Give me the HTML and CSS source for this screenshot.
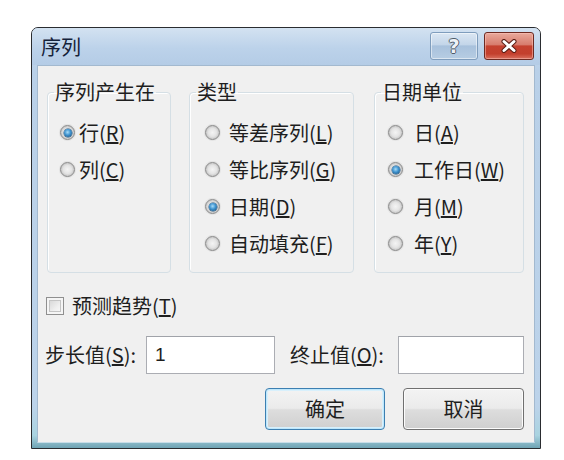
FILE: index.html
```html
<!DOCTYPE html>
<html lang="zh-CN">
<head>
<meta charset="utf-8">
<title>序列</title>
<link rel="stylesheet" href="styles.css">
</head>
<body>
<div class="dialog">
  <div class="titlebar">
    <span class="title">序列</span>
    <div class="caption-btns">
      <span class="cap-btn help"><span class="q">?</span></span>
      <span class="cap-btn close">
        <svg width="18" height="14" viewBox="0 0 18 14">
          <path d="M4 2.5 L14 11.5 M14 2.5 L4 11.5" stroke="#5a1d14" stroke-width="5" stroke-linecap="round"/>
          <path d="M4 2.5 L14 11.5 M14 2.5 L4 11.5" stroke="#ffffff" stroke-width="3" stroke-linecap="round"/>
        </svg>
      </span>
    </div>
  </div>
  <div class="client">
    <div class="groups">
      <fieldset class="group g1">
        <legend>序列产生在</legend>
        <div class="row"><span class="radio on"></span><span class="lbl">行(<u>R</u>)</span></div>
        <div class="row"><span class="radio"></span><span class="lbl">列(<u>C</u>)</span></div>
      </fieldset>
      <fieldset class="group g2">
        <legend>类型</legend>
        <div class="row"><span class="radio"></span><span class="lbl">等差序列(<u>L</u>)</span></div>
        <div class="row"><span class="radio"></span><span class="lbl">等比序列(<u>G</u>)</span></div>
        <div class="row"><span class="radio on"></span><span class="lbl">日期(<u>D</u>)</span></div>
        <div class="row"><span class="radio"></span><span class="lbl">自动填充(<u>F</u>)</span></div>
      </fieldset>
      <fieldset class="group g3">
        <legend>日期单位</legend>
        <div class="row"><span class="radio"></span><span class="lbl">日(<u>A</u>)</span></div>
        <div class="row"><span class="radio on"></span><span class="lbl">工作日(<u>W</u>)</span></div>
        <div class="row"><span class="radio"></span><span class="lbl">月(<u>M</u>)</span></div>
        <div class="row"><span class="radio"></span><span class="lbl">年(<u>Y</u>)</span></div>
      </fieldset>
    </div>
    <div class="check-row"><span class="checkbox"></span><span class="lbl">预测趋势(<u>T</u>)</span></div>
    <div class="field-row">
      <span class="flabel f1">步长值(<u>S</u>):</span>
      <span class="input i1">1</span>
      <span class="flabel f2">终止值(<u>O</u>):</span>
      <span class="input i2"></span>
    </div>
    <div class="btn-row">
      <span class="btn default">确定</span>
      <span class="btn">取消</span>
    </div>
  </div>
</div>
</body>
</html>
```
FILE: styles.css
```css
html, body {
  margin: 0;
  padding: 0;
  background: #ffffff;
}
body {
  font-family: "Noto Sans CJK SC", "Noto Sans", sans-serif;
  font-size: 20px;
  color: #1e1e1e;
}
.dialog {
  box-sizing: border-box;
  margin: 27px 0 0 31px;
  width: 510px;
  height: 422px;
  border: 1px solid #2a2c30;
  border-radius: 7px 7px 0 0;
  background: linear-gradient(to bottom, #cbdcee 0%, #b9d0e8 10%, #bcd3ea 90%, #a9d3e0 97%, #6fa4b4 100%);
  display: flex;
  flex-direction: column;
}
.titlebar {
  height: 37px;
  display: flex;
  align-items: flex-start;
  justify-content: space-between;
  padding: 0 6px 0 9px;
  background: linear-gradient(to bottom, #d3e2f1 0%, #bcd2ea 55%, #b4cce6 100%);
  border-radius: 6px 6px 0 0;
}
.title {
  font-size: 20px;
  line-height: 20px;
  margin-top: 9px;
  color: #15223a;
}
.caption-btns {
  display: flex;
  gap: 6px;
  margin-top: 4px;
}
.cap-btn {
  box-sizing: border-box;
  height: 28px;
  border-radius: 3px;
  display: flex;
  align-items: center;
  justify-content: center;
}
.help {
  width: 48px;
  border: 1px solid #7f9dbd;
  background: linear-gradient(to bottom, #dbe7f3 0%, #c3d5e9 45%, #a8c1dc 50%, #b7cde3 100%);
  box-shadow: inset 0 0 0 1px rgba(255,255,255,0.5);
}
.help .q {
  font-family: "DejaVu Sans", sans-serif;
  font-weight: bold;
  font-size: 19px;
  line-height: 1;
  color: #eef2f6;
  text-shadow: 1px 0 0 #4f5c6b, -1px 0 0 #4f5c6b, 0 1px 0 #4f5c6b, 0 -1px 0 #4f5c6b;
}
.close {
  width: 50px;
  border: 1px solid #6d2a22;
  background: linear-gradient(to bottom, #e9a99c 0%, #d77c6d 45%, #c5412f 50%, #c33f2d 80%, #d9705f 100%);
  box-shadow: inset 0 0 0 1px rgba(255,200,190,0.5);
}
.client {
  box-sizing: border-box;
  margin: 0 5px;
  height: 378px;
  background: #f0f0f0;
  border: 1px solid #a3b9cf;
  border-bottom-color: #c8dde8;
  padding: 16px 10px 0 8px;
  display: flex;
  flex-direction: column;
}
.groups {
  display: flex;
  margin-left: 1px;
}
.group {
  box-sizing: border-box;
  margin: 0;
  height: 191px;
  border: 1px solid #d5dfe5;
  border-radius: 4px;
  padding: 12px 0 0 0;
  box-shadow: inset 1px 1px 0 #ffffff;
  min-width: 0;
}
.group legend {
  padding: 0 1px;
  margin-left: 6px;
  line-height: 20px;
  height: 20px;
  white-space: nowrap;
}
.g1 { width: 124px; }
.g1 .row { padding-left: 12px; }
.g1 .lbl { margin-left: 4px; }
.g2 { width: 165px; margin-left: 18px; }
.g2 .row { padding-left: 15px; }
.g2 .lbl { margin-left: 9px; }
.g3 { width: 150px; margin-left: 20px; }
.g3 .row { padding-left: 13px; }
.g3 .lbl { margin-left: 11px; }
.row {
  height: 37px;
  display: flex;
  align-items: center;
  white-space: nowrap;
}
.lbl {
  line-height: 20px;
  margin-left: 4px;
}
.radio {
  box-sizing: border-box;
  position: relative;
  width: 15px;
  height: 15px;
  flex: none;
  border-radius: 50%;
  border: 1px solid #8a8a8a;
  background: radial-gradient(circle at 50% 50%, #f4f4f4 0%, #e4e4e4 45%, #c4c4c4 75%, #dadada 100%);
  box-shadow: 0 0 0 1px rgba(200,200,200,0.35);
}
.radio.on::after {
  content: "";
  position: absolute;
  left: 2.5px;
  top: 2.5px;
  width: 8px;
  height: 8px;
  border-radius: 50%;
  background: radial-gradient(circle at 45% 40%, #a8dcf8 0%, #3f93cf 45%, #14456f 100%);
  box-shadow: 0 0 0 0.5px #1d4e78;
}
.check-row {
  display: flex;
  align-items: center;
  height: 18px;
  margin-top: 24px;
}
.check-row .lbl { margin-left: 8px; }
.checkbox {
  box-sizing: border-box;
  width: 18px;
  height: 18px;
  border: 1px solid #8f8f8f;
  background: linear-gradient(135deg, #cfcfcf 0%, #efefef 60%, #fdfdfd 100%);
  box-shadow: inset 0 0 0 2px #f5f5f5, inset 0 0 0 3px #c4c4c4;
}
.field-row {
  display: flex;
  align-items: center;
  margin-top: 21px;
  height: 38px;
}
.flabel {
  white-space: nowrap;
  line-height: 20px;
}
.f1 { width: 101px; margin-left: -1px; }
.f2 { width: 108px; margin-left: 15px; }
.input {
  box-sizing: border-box;
  height: 38px;
  background: #ffffff;
  border: 1px solid #abadb3;
  border-top-color: #a0a3a9;
  font-family: "Liberation Sans", sans-serif;
  font-size: 19px;
  line-height: 36px;
  padding-left: 8px;
}
.i1 { width: 129px; }
.i2 { width: 126px; }
.btn-row {
  display: flex;
  justify-content: flex-end;
  gap: 18px;
  margin-top: 14px;
}
.btn {
  box-sizing: border-box;
  width: 121px;
  height: 42px;
  border: 1px solid #707070;
  border-radius: 4px;
  background: linear-gradient(to bottom, #f3f3f3 0%, #ebebeb 48%, #dddddd 52%, #cfcfcf 100%);
  box-shadow: inset 0 0 0 1px #fcfcfc;
  display: flex;
  align-items: center;
  justify-content: center;
  line-height: 20px;
}
.btn.default {
  width: 120px;
  border-color: #3c7fb1;
  box-shadow: inset 0 0 0 1px #bfe7fb, inset 0 0 0 2px #d8f0fc;
}
```
